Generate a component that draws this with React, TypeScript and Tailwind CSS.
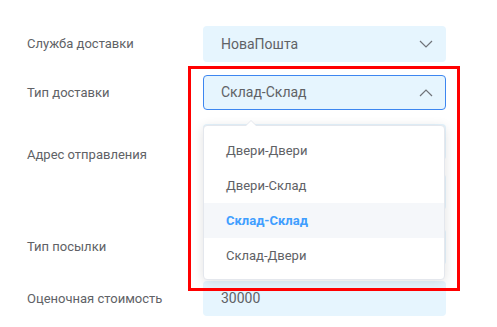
import React from "react";

const font = { fontFamily: "Roboto, 'Liberation Sans', Arial, sans-serif" };

function Chevron({ up }: { up?: boolean }) {
  return (
    <svg width="14" height="8" viewBox="0 0 14 8" className="shrink-0">
      <polyline
        points={up ? "1,7 7,1 13,7" : "1,1 7,7 13,1"}
        fill="none"
        stroke="#707379"
        strokeWidth="1.2"
      />
    </svg>
  );
}

function Row({ label, children, h = "h-9", top }: { label: string; children: React.ReactNode; h?: string; top?: boolean }) {
  return (
    <div className={`flex ${top ? "items-start" : "items-center"}`}>
      <div className={`w-[176px] text-[13px] text-[#606266] ${top ? "pt-[21px]" : ""}`}>{label}</div>
      <div className={`w-[243px] ${h}`}>{children}</div>
    </div>
  );
}

const options = ["Двери-Двери", "Двери-Склад", "Склад-Склад", "Склад-Двери"];

export default function App() {
  return (
    <div className="relative w-[497px] h-[327px] bg-white overflow-hidden" style={font}>
      <div className="flex flex-col gap-[14px] pl-[27px] pt-[26px]">
        <Row label="Служба доставки">
          <div className="h-full rounded bg-[#e6f5fe] flex items-center justify-between pl-[18px] pr-[13px] text-[14px] text-[#606266]">
            <span>НоваПошта</span>
            <Chevron />
          </div>
        </Row>
        <div className="-mt-[1px]">
          <Row label="Тип доставки" h="h-[35px]">
            <div className="h-full rounded border border-[#3d86f0] bg-[#e6f5fe] flex items-center justify-between pl-[17px] pr-[12px] text-[14px] text-[#606266]">
              <span>Склад-Склад</span>
              <Chevron up />
            </div>
          </Row>
        </div>
        <Row label="Адрес отправления" h="h-[91px]" top>
          <div className="h-full flex flex-col gap-[14px]">
            <div className="h-9 rounded bg-[#e6f5fe]" />
            <div className="h-9 rounded bg-[#e6f5fe]" />
          </div>
        </Row>
        <Row label="Тип посылки">
          <div className="h-full rounded bg-[#e6f5fe]" />
        </Row>
        <div className="mt-[2px]">
          <Row label="Оценочная стоимость" h="h-[35px]">
            <div className="h-full rounded bg-[#e6f5fe] flex items-center pl-[18px] text-[14px] text-[#606266]">30000</div>
          </Row>
        </div>
      </div>

      {/* dropdown menu */}
      <div className="absolute left-[203px] top-[125px] w-[242px] rounded bg-white border border-[#e4e7ed] shadow-[0_2px_12px_rgba(0,0,0,0.12)] pt-[7px] pb-[6px]">
        <div className="absolute -top-[6px] left-[41px] w-0 h-0 border-l-[6px] border-r-[6px] border-b-[6px] border-l-transparent border-r-transparent border-b-[#e4e7ed]" />
        <div className="absolute -top-[5px] left-[42px] w-0 h-0 border-l-[5px] border-r-[5px] border-b-[5px] border-l-transparent border-r-transparent border-b-white" />
        {options.map((o, i) => (
          <div
            key={o}
            className={`h-[35px] flex items-center pl-[22px] text-[13px] ${
              i === 2 ? "bg-[#f5f7fa] text-[#409eff] font-bold" : "text-[#606266]"
            }`}
          >
            {o}
          </div>
        ))}
      </div>

      {/* annotation */}
      <div className="absolute left-[188px] top-[66px] w-[272px] h-[225px] border-[3px] border-[#ff0000]" />
    </div>
  );
}
